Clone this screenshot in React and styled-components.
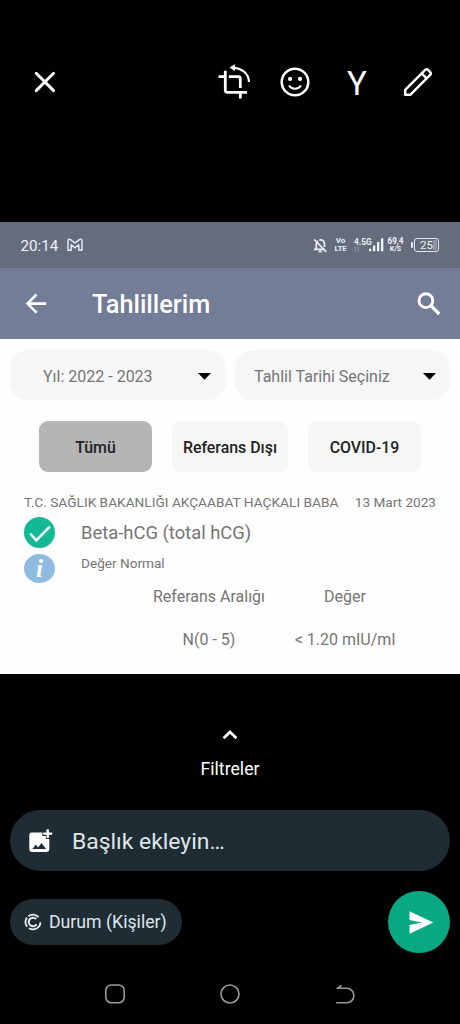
import React from "react";
import styled, { createGlobalStyle } from "styled-components";

const GlobalStyle = createGlobalStyle`
  * {
    box-sizing: border-box;
  }
  body {
    margin: 0;
    background-color: #000;
    font-family: Roboto, "Liberation Sans", sans-serif;
  }
  svg {
    display: block;
    flex: none;
  }
`;

const tests = [
  {
    id: 1,
    hospital: "T.C. SAĞLIK BAKANLIĞI AKÇAABAT HAÇKALI BABA",
    date: "13 Mart 2023",
    name: "Beta-hCG (total hCG)",
    status: "Değer Normal",
    range: "N(0 - 5)",
    value: "< 1.20 mIU/ml",
  },
];

const CloseIcon = () => (
  <svg width="22" height="22" viewBox="34 71 22 22" fill="none" stroke="#fff" strokeWidth="2.9" strokeLinecap="round">
    <path d="M36.2 73.2L53.6 90.6M53.6 73.2L36.2 90.6" />
  </svg>
);

const CropRotateIcon = () => (
  <svg width="34" height="36" viewBox="218 64 34 36" fill="none" stroke="#fff" strokeWidth="2.8">
    <path d="M218.5 76.7h6.8M225.3 70.8v19.5q0 2 2 2H247M228.8 76.7h9.5q2 0 2 2v9.2M240.3 92.3v6.3" />
    <path d="M233 67.8C242 68 248.6 73.5 249 82" strokeWidth="2.2" />
    <path d="M229.4 67.5l5.6-3.300v6.800z" fill="#fff" stroke="none" />
  </svg>
);

const SmileIcon = () => (
  <svg width="30" height="30" viewBox="280.3 66.6 30 30" fill="none" stroke="#fff" strokeWidth="2.5">
    <circle cx="295.3" cy="81.6" r="13.3" />
    <circle cx="290.4" cy="78.5" r="2.1" fill="#fff" stroke="none" />
    <circle cx="300.3" cy="78.5" r="2.1" fill="#fff" stroke="none" />
    <path d="M289.3 85.2c2.6 4.3 9.4 4.3 12 0" strokeWidth="2" />
  </svg>
);

const PencilIcon = () => (
  <svg width="30" height="30" viewBox="403 67 30 30" fill="none" stroke="#fff" strokeWidth="2.5" strokeLinejoin="round">
    <path d="M405.2 94.8v-4.9l20-20q1.4-1.2 2.8 0l2.2 2.2q1.3 1.4 0 2.8l-20 19.9z" />
    <path d="M421.6 73.4l5.2 5.2" />
  </svg>
);

const GmailIcon = () => (
  <svg width="16" height="14" viewBox="0 0 16 14" fill="none" stroke="#eef1f8" strokeWidth="1.4" strokeLinejoin="round">
    <path d="M1 12.2V3Q1 .2 3.6 1.6L8 5l4.400-3.400Q15 .2 15 3v9.200h-3.200V6.700L8 9.700 4.200 6.700v5.500z" />
  </svg>
);

const BellOffIcon = () => (
  <svg width="14" height="15" viewBox="313 237 14 15" fill="none" stroke="#eef1f8" strokeWidth="1.7">
    <path d="M316.300 248.200V243q.2-2 1.600-3.100M319.300 239.200c3-1.200 5.200 1 5.200 3.800v3M314 248.400h10" />
    <path d="M314.300 238.500l12 12.300" />
    <path d="M318.600 250.500h3.200" strokeWidth="2" />
  </svg>
);

const SignalIcon = () => (
  <svg width="15" height="14" viewBox="0 0 15 14" fill="#f1f4fb">
    <path d="M0 10.700h2.300v2.500H0zM4 7.500h2.300v5.700H4zM8 4h2.300v9.200H8zM12 .3h2.300v12.900H12z" />
  </svg>
);

const TransferIcon = () => (
  <svg width="6" height="6" viewBox="0 0 6 6" fill="none" stroke="#9299aa" strokeWidth=".9">
    <path d="M1.600 6V.800M.400 2l1.200-1.200M4.300 0v5.200M5.500 4L4.300 5.200" />
  </svg>
);

const BackIcon = () => (
  <svg width="22" height="22" viewBox="25 293 22 22" fill="none" stroke="#fff" strokeWidth="2.6">
    <path d="M46.300 303.600H27.800M36.600 294.500l-9.100 9.100 9.100 9.100" />
  </svg>
);

const SearchIcon = () => (
  <svg width="24" height="24" viewBox="417 291 24 24" fill="none" stroke="#fff" strokeWidth="2.900">
    <circle cx="425.900" cy="299.700" r="6.900" />
    <path d="M430.900 304.700l8.300 8.300" strokeWidth="3.300" />
  </svg>
);

const CaretIcon = () => (
  <svg width="13" height="7" viewBox="0 0 13 7" fill="#000">
    <path d="M0 0h13L6.500 6.700z" />
  </svg>
);

const CheckIcon = () => (
  <svg width="31" height="31" viewBox="0 0 31 31" fill="none">
    <circle cx="15.500" cy="15.500" r="15.500" fill="#12b994" />
    <path d="M6.200 16.500l6.100 6.800L25.800 9.600" stroke="#f2fffb" strokeWidth="2.600" />
  </svg>
);

const ChevronUpIcon = () => (
  <svg width="16" height="10" viewBox="0 0 16 10" fill="none" stroke="#fff" strokeWidth="2.700">
    <path d="M1.600 8.300L8 2l6.400 6.300" />
  </svg>
);

const AddPhotoIcon = () => (
  <svg width="24" height="24" viewBox="0 0 24 24">
    <path
      d="M2.400 3.500h11v3.400h3.400v3.200h3.500v10.500q0 2.400-2.400 2.400H2.700Q.300 23 .300 20.600V5.900q0-2.400 2.100-2.400zM3.400 20h13.700l-4.600-6.100-3.400 4.500-2.300-3z"
      fill="#fff"
      fillRule="evenodd"
    />
    <path d="M18.700.200v8.800M14.200 4.600h9" stroke="#fff" strokeWidth="2.400" />
  </svg>
);

const StatusIcon = () => (
  <svg width="18" height="18" viewBox="0 0 18 18" fill="none" stroke="#e4eaed" strokeWidth="1.800">
    <path d="M16.400 9.200A7.400 7.400 0 0 1 5 15.200M3.200 13.600A7.400 7.400 0 0 1 3 4.600M4.400 3.200A7.400 7.400 0 0 1 14.600 4.200" />
    <path d="M12.600 11.400A4.300 4.300 0 1 1 12.300 6.200" strokeWidth="2" />
  </svg>
);

const SendIcon = () => (
  <svg width="25" height="23" viewBox="0 0 25 23" fill="#fff">
    <path d="M.500.200L24.300 11.500.500 22.800v-8.700l12.500-2.600L.500 8.900z" />
  </svg>
);

const RecentsIcon = () => (
  <svg width="20" height="20" viewBox="0 0 20 20" fill="none" stroke="#9a9a9a" strokeWidth="1.600">
    <rect x=".8" y="1" width="18.400" height="17.800" rx="5.500" />
  </svg>
);

const HomeIcon = () => (
  <svg width="20" height="20" viewBox="0 0 20 20" fill="none" stroke="#9a9a9a" strokeWidth="1.600">
    <circle cx="10" cy="10" r="9" />
  </svg>
);

const ReturnIcon = () => (
  <svg width="20" height="20" viewBox="0 0 20 20" fill="none" stroke="#9a9a9a" strokeWidth="1.600">
    <path d="M1.200 18.700h10.500a7.200 7.200 0 0 0 0-14.400H2.600M1.600 4.600L6.600 1.500" />
  </svg>
);

const App = () => {
  return (
    <Screen>
      <GlobalStyle />
      <EditBar>
        <CloseIcon />
        <Tools>
          <CropRotateIcon />
          <SmileIcon />
          <TextTool>Y</TextTool>
          <PencilIcon />
        </Tools>
      </EditBar>

      <StatusBar>
        <Clock>20:14</Clock>
        <GmailIcon />
        <StatusGroup>
          <BellOffIcon />
          <Stack $width={13}>
            <Tiny $size={8}>Vo</Tiny>
            <Tiny $size={7.6}>LTE</Tiny>
          </Stack>
          <Network>
            <Stack $left>
              <Tiny $size={8.4}>4.5G</Tiny>
              <TransferIcon />
            </Stack>
            <SignalIcon />
          </Network>
          <Stack $width={17} $gap={3}>
            <Tiny $size={8.2}>69,4</Tiny>
            <Tiny $size={7}>K/S</Tiny>
          </Stack>
          <Battery>
            <BatteryBody>25</BatteryBody>
          </Battery>
        </StatusGroup>
      </StatusBar>

      <AppBar>
        <BackIcon />
        <Title>Tahlillerim</Title>
        <SearchIcon />
      </AppBar>

      <Content>
        <Selects>
          <Select $pad="2px 15px 0 33px">
            Yıl: 2022 - 2023
            <CaretIcon />
          </Select>
          <Select $pad="2px 14px 0 19px">
            Tahlil Tarihi Seçiniz
            <CaretIcon />
          </Select>
        </Selects>
        <Tabs>
          <Tab $active>Tümü</Tab>
          <Tab>Referans Dışı</Tab>
          <Tab>COVID-19</Tab>
        </Tabs>
        {tests.map((test) => (
          <Result key={test.id}>
            <ResultTop>
              <Hospital>{test.hospital}</Hospital>
              <DateText>{test.date}</DateText>
            </ResultTop>
            <ResultBody>
              <Badges>
                <CheckIcon />
                <InfoBadge>i</InfoBadge>
              </Badges>
              <div>
                <TestName>{test.name}</TestName>
                <TestStatus>{test.status}</TestStatus>
              </div>
            </ResultBody>
            <Values>
              <span>Referans Aralığı</span>
              <span>Değer</span>
              <span>{test.range}</span>
              <span>{test.value}</span>
            </Values>
          </Result>
        ))}
      </Content>

      <Filters>
        <ChevronUpIcon />
        <FilterLabel>Filtreler</FilterLabel>
      </Filters>

      <Caption>
        <AddPhotoIcon />
        <span>Başlık ekleyin…</span>
      </Caption>

      <SendRow>
        <Audience>
          <StatusIcon />
          <span>Durum (Kişiler)</span>
        </Audience>
        <SendButton>
          <SendIcon />
        </SendButton>
      </SendRow>

      <NavBar>
        <RecentsIcon />
        <HomeIcon />
        <ReturnIcon />
      </NavBar>
    </Screen>
  );
};

const Screen = styled.main`
  display: flex;
  flex-direction: column;
  width: 460px;
  height: 1024px;
  overflow: hidden;
  background-color: #000;
  white-space: nowrap;
`;

const EditBar = styled.header`
  display: flex;
  flex: none;
  justify-content: space-between;
  align-items: center;
  height: 222px;
  padding: 0 27px 58px 34px;
`;

const Tools = styled.div`
  display: flex;
  justify-content: space-between;
  align-items: center;
  width: 215px;
`;

const TextTool = styled.span`
  width: 20px;
  margin: 4px 8px 0 9px;
  color: #fff;
  font-size: 33px;
  line-height: 36px;
  text-align: center;
`;

const StatusBar = styled.section`
  display: flex;
  flex: none;
  align-items: center;
  height: 46px;
  padding: 0 21px 0 20.5px;
  background-color: #656c7e;
  color: #eef1f8;
`;

const Clock = styled.span`
  width: 46.5px;
  padding-top: 1px;
  font-size: 15.2px;
`;

const StatusGroup = styled.div`
  display: flex;
  align-items: center;
  margin-left: auto;
`;

const Stack = styled.div`
  display: flex;
  flex-direction: column;
  align-items: ${({ $left }) => ($left ? "flex-start" : "center")};
  width: ${({ $width }) => ($width ? `${$width}px` : "auto")};
  margin-left: ${({ $gap = 7 }) => $gap}px;
`;

const Tiny = styled.span`
  font-size: ${({ $size }) => $size}px;
  font-weight: 700;
  line-height: 8px;
`;

const Network = styled.div`
  display: flex;
  align-items: center;
  & > svg {
    margin-left: -4px;
  }
  ${Stack} {
    width: 19px;
  }
`;

const Battery = styled.div`
  display: flex;
  align-items: center;
  margin-left: 7px;
  &::before {
    content: "";
    width: 2px;
    height: 6px;
    margin-right: 1px;
    border-radius: 1px;
    background-color: #e8ecf5;
  }
`;

const BatteryBody = styled.span`
  width: 25px;
  height: 14px;
  border: 1.3px solid #dfe4ef;
  border-radius: 3px;
  background: linear-gradient(90deg, transparent 17px, #8e95a5 17px) content-box;
  padding: 1px;
  font-size: 11.5px;
  line-height: 11px;
  text-align: center;
`;

const AppBar = styled.section`
  display: flex;
  flex: none;
  align-items: center;
  height: 71px;
  padding: 0 19px 0 25px;
  background-color: #737d98;
`;

const Title = styled.h1`
  flex: 1;
  margin: 1px 0 0 45px;
  color: #fff;
  font-size: 25.3px;
  font-weight: 500;
`;

const Content = styled.section`
  flex: none;
  height: 335px;
  padding-top: 11px;
  background-color: #fefefe;
  color: #757575;
`;

const Selects = styled.div`
  display: grid;
  grid-template-columns: 216px 215px;
  gap: 9px;
  padding-left: 10px;
`;

const Select = styled.div`
  display: flex;
  justify-content: space-between;
  align-items: center;
  height: 50px;
  padding: ${({ $pad }) => $pad};
  border-radius: 18px;
  background-color: #f6f6f6;
  font-size: 16px;
`;

const Tabs = styled.div`
  display: grid;
  grid-template-columns: 113px 116px 113px;
  gap: 20px;
  margin-top: 21px;
  padding-left: 39px;
`;

const Tab = styled.button`
  height: 51px;
  padding: 1px 0 0;
  border: none;
  border-radius: 9px;
  background-color: ${({ $active }) => ($active ? "#b5b5b5" : "#f6f6f6")};
  color: #222;
  font-family: inherit;
  font-size: 15.9px;
  font-weight: 500;
`;

const Result = styled.article`
  padding: 20px 24px 0;
`;

const ResultTop = styled.div`
  display: flex;
  justify-content: space-between;
  line-height: 20px;
`;

const Hospital = styled.span`
  font-size: 13.7px;
`;

const DateText = styled.span`
  font-size: 13.6px;
`;

const ResultBody = styled.div`
  display: flex;
  gap: 26px;
  margin-top: 5px;
`;

const Badges = styled.div`
  display: flex;
  flex-direction: column;
  gap: 6px;
`;

const InfoBadge = styled.span`
  width: 31px;
  height: 29px;
  border-radius: 50%;
  background-color: #8fbbe0;
  color: #fff;
  font: italic 700 25px/29px "Liberation Serif", serif;
  text-align: center;
`;

const TestName = styled.div`
  font-size: 18.4px;
  line-height: 32px;
`;

const TestStatus = styled.div`
  margin-top: 4px;
  font-size: 13.6px;
  line-height: 20px;
`;

const Values = styled.div`
  display: grid;
  grid-template-columns: 114px 102px;
  gap: 23px 28px;
  margin: 4px 0 0 128px;
  font-size: 16px;
  line-height: 20px;
  text-align: center;
`;

const Filters = styled.section`
  display: flex;
  flex: none;
  flex-direction: column;
  align-items: center;
  height: 136px;
  padding-top: 56px;
`;

const FilterLabel = styled.span`
  margin-top: 18px;
  color: #fff;
  font-size: 17.7px;
  line-height: 22px;
`;

const Caption = styled.div`
  display: flex;
  flex: none;
  align-items: center;
  gap: 19px;
  height: 61px;
  margin: 0 10px;
  padding-left: 19px;
  border-radius: 31px;
  background-color: #202c33;
  color: #dfe6ea;
  font-size: 22.9px;
  span {
    padding-top: 2px;
  }
`;

const SendRow = styled.div`
  display: flex;
  flex: none;
  justify-content: space-between;
  align-items: center;
  height: 62px;
  margin-top: 20px;
  padding: 0 10px;
`;

const Audience = styled.div`
  display: flex;
  align-items: center;
  gap: 7px;
  width: 172px;
  height: 46px;
  padding-left: 14px;
  border-radius: 23px;
  background-color: #202c33;
  color: #dfe6ea;
  font-size: 17.7px;
`;

const SendButton = styled.button`
  display: flex;
  justify-content: center;
  align-items: center;
  width: 62px;
  height: 62px;
  padding: 0 0 0 4px;
  border: none;
  border-radius: 50%;
  background-color: #08a882;
`;

const NavBar = styled.nav`
  display: flex;
  flex: none;
  justify-content: space-between;
  margin-top: 31px;
  padding: 0 105px;
`;

export default App;
